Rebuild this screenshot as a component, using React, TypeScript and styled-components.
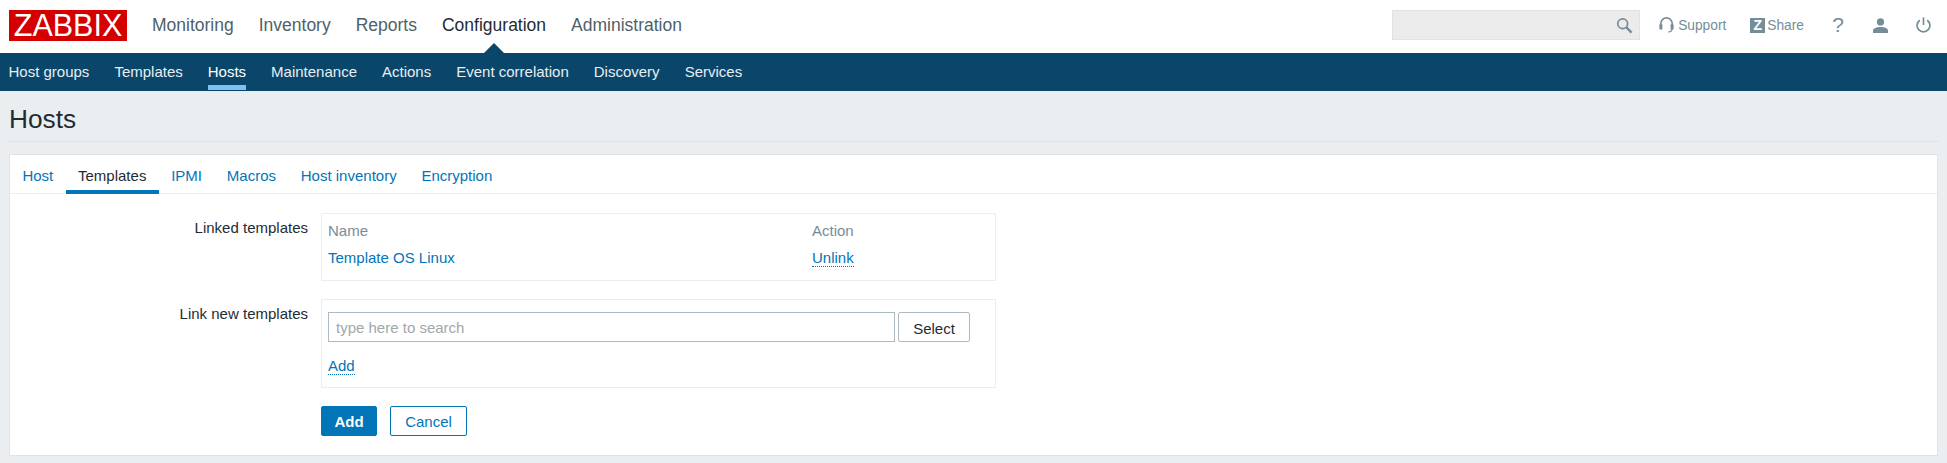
import React from "react";
import styled, { createGlobalStyle } from "styled-components";

const Global = createGlobalStyle`
  html, body { margin: 0; padding: 0; background: #ebeef0; }
  body { font-family: "Liberation Sans", Arial, sans-serif; font-size: 15px; color: #1f2c33; overflow: hidden; }
`;

const Page = styled.div`
  width: 1947px;
  height: 463px;
  display: flex;
  flex-direction: column;
  overflow: hidden;
`;

const TopBar = styled.header`
  height: 53px;
  background: #fff;
  display: flex;
  align-items: flex-start;
  padding-left: 9px;
  padding-right: 16px;
  box-sizing: border-box;
  flex-shrink: 0;
`;

const Logo = styled.div`
  width: 118px;
  height: 31px;
  margin-top: 10px;
  background: #d40000;
  color: #fff;
  font-size: 30.5px;
  line-height: 31px;
  text-align: center;
`;

const MainNav = styled.nav`
  display: flex;
  gap: 25px;
  margin-left: 25px;
  height: 53px;
`;

const MainItem = styled.a<{ $active?: boolean }>`
  position: relative;
  font-size: 17.5px;
  line-height: 50px;
  color: ${(p) => (p.$active ? "#1f2c33" : "#4f5f6a")};
  &::after {
    content: "";
    display: ${(p) => (p.$active ? "block" : "none")};
    position: absolute;
    left: 50%;
    bottom: 0;
    margin-left: -10px;
    border-left: 10px solid transparent;
    border-right: 10px solid transparent;
    border-bottom: 10px solid #0a466a;
  }
`;

const Tools = styled.div`
  margin-left: auto;
  display: flex;
  align-items: center;
  height: 50px;
`;

const SearchBox = styled.div`
  width: 248px;
  height: 30px;
  box-sizing: border-box;
  background: #ebebeb;
  border: 1px solid #e2e2e2;
  display: flex;
  align-items: center;
  justify-content: flex-end;
  padding-right: 6px;
  margin-right: 19px;
`;

const ToolLink = styled.a<{ $gap: number }>`
  display: flex;
  align-items: center;
  gap: ${(p) => p.$gap}px;
  font-size: 13.75px;
  color: #768d99;
`;

const ToolGroup = styled.div<{ $ml: number }>`
  display: flex;
  align-items: center;
  justify-content: center;
  margin-left: ${(p) => p.$ml}px;
`;

const ShareBadge = styled.span`
  width: 15px;
  height: 15px;
  background: #768d99;
  color: #fff;
  font-size: 14px;
  font-weight: 700;
  line-height: 15px;
  text-align: center;
  display: inline-block;
`;

const HelpMark = styled.span`
  width: 20px;
  text-align: center;
  font-size: 21px;
  color: #768d99;
  line-height: 20px;
`;

const SubNav = styled.nav`
  height: 38px;
  background: #0a466a;
  display: flex;
  gap: 25px;
  padding-left: 8.5px;
  flex-shrink: 0;
`;

const SubItem = styled.a<{ $active?: boolean }>`
  height: 38px;
  box-sizing: border-box;
  line-height: 38px;
  font-size: 15px;
  color: ${(p) => (p.$active ? "#fff" : "#e8eef2")};
  position: relative;
  &::after {
    content: "";
    display: ${(p) => (p.$active ? "block" : "none")};
    position: absolute;
    left: 0;
    right: 0;
    top: 32px;
    height: 5px;
    background: #7ec0f0;
  }
`;

const TitleBar = styled.div`
  margin: 0 8px 0 9px;
  height: 51px;
  border-bottom: 1px solid #dfe4e7;
  box-sizing: border-box;
  flex-shrink: 0;
`;

const Title = styled.h1`
  margin: 0;
  font-weight: 400;
  font-size: 26.25px;
  line-height: 30px;
  padding-top: 13px;
  color: #1f2c33;
`;

const Card = styled.section`
  margin: 12px 9px 0 9px;
  height: 302px;
  box-sizing: border-box;
  background: #fff;
  border: 1px solid #dfe4e7;
  flex-shrink: 0;
`;

const Tabs = styled.div`
  height: 39px;
  box-sizing: border-box;
  border-bottom: 1px solid #ebeef0;
  display: flex;
`;

const Tab = styled.a<{ $active?: boolean }>`
  height: 39px;
  box-sizing: border-box;
  padding: 0 12.4px;
  line-height: 41px;
  font-size: 15px;
  color: ${(p) => (p.$active ? "#1f2c33" : "#0275b8")};
  border-bottom: 4px solid ${(p) => (p.$active ? "#0275b8" : "transparent")};
`;

const Form = styled.div`
  display: grid;
  grid-template-columns: 298px 675px;
  column-gap: 13px;
  padding-top: 19px;
  align-items: start;
`;

const Label = styled.div`
  text-align: right;
  font-size: 15px;
  line-height: 18px;
  padding-top: 6px;
  color: #1f2c33;
`;

const Box = styled.div<{ $h: number }>`
  height: ${(p) => p.$h}px;
  box-sizing: border-box;
  border: 1px solid #ebeef0;
  padding: 0 6px;
`;

const TemplateRow = styled.div<{ $top: number; $muted?: boolean }>`
  display: grid;
  grid-template-columns: 484px 1fr;
  margin-top: ${(p) => p.$top}px;
  line-height: 18px;
  font-size: 15px;
  color: ${(p) => (p.$muted ? "#768d99" : "#0275b8")};
`;

const DottedLink = styled.a`
  justify-self: start;
  color: #0275b8;
  border-bottom: 1px dotted #0275b8;
  line-height: 17px;
  font-size: 15px;
  display: inline-block;
`;

const Spacer = styled.div<{ $h: number }>`
  grid-column: 1 / -1;
  height: ${(p) => p.$h}px;
`;

const SearchRow = styled.div`
  display: flex;
  gap: 3px;
  margin-top: 12px;
  margin-bottom: 15px;
`;

const SearchField = styled.div`
  width: 567px;
  height: 30px;
  box-sizing: border-box;
  border: 1px solid #acbbc2;
  padding: 0 7px;
  line-height: 30px;
  font-size: 15px;
  color: #a0a8ac;
`;

const SelectButton = styled.button`
  width: 72px;
  height: 30px;
  box-sizing: border-box;
  background: #fff;
  border: 1px solid #acbbc2;
  border-radius: 2px;
  font: inherit;
  font-size: 15px;
  color: #1f2c33;
  padding: 2px 0 0;
`;

const Actions = styled.div`
  grid-column: 2;
  display: flex;
  gap: 13px;
  padding-top: 18px;
`;

const PrimaryButton = styled.button`
  width: 56px;
  height: 30px;
  border: 1px solid #0275b8;
  border-radius: 2px;
  background: #0275b8;
  color: #fff;
  font: inherit;
  font-size: 15px;
  font-weight: 700;
  padding: 0;
`;

const SecondaryButton = styled.button`
  width: 77px;
  height: 30px;
  border: 1px solid #0275b8;
  border-radius: 2px;
  background: #fff;
  color: #0275b8;
  font: inherit;
  font-size: 15px;
  padding: 0;
`;

const SearchIcon = () => (
  <svg width="17" height="17" viewBox="0 0 17 17" fill="none" stroke="#768d99">
    <circle cx="6.7" cy="6.7" r="4.9" strokeWidth="1.7" />
    <path d="M10.4 10.4L15.6 15.6" strokeWidth="2.4" />
  </svg>
);

const HeadsetIcon = () => (
  <svg width="15" height="16" viewBox="0 0 15 16" fill="none">
    <path d="M1.8 9V6.6a5.7 5.7 0 0 1 11.4 0V9" stroke="#768d99" strokeWidth="1.6" />
    <rect x="0.4" y="7" width="3" height="5.6" rx="1.2" fill="#768d99" />
    <rect x="11.6" y="7" width="3" height="5.6" rx="1.2" fill="#768d99" />
    <path d="M13 12c0 2-1.6 3-4 3" stroke="#768d99" strokeWidth="1.2" />
  </svg>
);

const UserIcon = () => (
  <svg width="15" height="15" viewBox="0 0 15 15" fill="#768d99">
    <circle cx="7.5" cy="3.9" r="3.6" />
    <path d="M0 15v-2.4c0-2.5 3.5-3.7 7.5-3.7s7.5 1.2 7.5 3.7V15z" />
  </svg>
);

const PowerIcon = () => (
  <svg width="15" height="16" viewBox="0 0 15 16" fill="none" stroke="#768d99" strokeWidth="1.7">
    <path d="M7.5 0.4V8" />
    <path d="M3.8 3.2a6.4 6.4 0 1 0 7.4 0" />
  </svg>
);

const mainItems = ["Monitoring", "Inventory", "Reports", "Configuration", "Administration"];
const subItems = ["Host groups", "Templates", "Hosts", "Maintenance", "Actions", "Event correlation", "Discovery", "Services"];
const tabs = ["Host", "Templates", "IPMI", "Macros", "Host inventory", "Encryption"];

export default function App() {
  return (
    <Page>
      <Global />
      <TopBar>
        <Logo>ZABBIX</Logo>
        <MainNav>
          {mainItems.map((m) => (
            <MainItem key={m} $active={m === "Configuration"}>{m}</MainItem>
          ))}
        </MainNav>
        <Tools>
          <SearchBox><SearchIcon /></SearchBox>
          <ToolGroup $ml={0}>
            <ToolLink $gap={4}><HeadsetIcon />Support</ToolLink>
          </ToolGroup>
          <ToolGroup $ml={24}>
            <ToolLink $gap={2}><ShareBadge>Z</ShareBadge>Share</ToolLink>
          </ToolGroup>
          <ToolGroup $ml={24}>
            <HelpMark>?</HelpMark>
          </ToolGroup>
          <ToolGroup $ml={25}>
            <UserIcon />
          </ToolGroup>
          <ToolGroup $ml={28}>
            <PowerIcon />
          </ToolGroup>
        </Tools>
      </TopBar>
      <SubNav>
        {subItems.map((s) => (
          <SubItem key={s} $active={s === "Hosts"}>{s}</SubItem>
        ))}
      </SubNav>
      <TitleBar><Title>Hosts</Title></TitleBar>
      <Card>
        <Tabs>
          {tabs.map((t) => (
            <Tab key={t} $active={t === "Templates"}>{t}</Tab>
          ))}
        </Tabs>
        <Form>
          <Label>Linked templates</Label>
          <Box $h={68}>
            <TemplateRow $top={8} $muted><span>Name</span><span>Action</span></TemplateRow>
            <TemplateRow $top={9}><span>Template OS Linux</span><DottedLink>Unlink</DottedLink></TemplateRow>
          </Box>
          <Spacer $h={18} />
          <Label>Link new templates</Label>
          <Box $h={89}>
            <SearchRow>
              <SearchField>type here to search</SearchField>
              <SelectButton>Select</SelectButton>
            </SearchRow>
            <DottedLink>Add</DottedLink>
          </Box>
          <Actions>
            <PrimaryButton>Add</PrimaryButton>
            <SecondaryButton>Cancel</SecondaryButton>
          </Actions>
        </Form>
      </Card>
    </Page>
  );
}
